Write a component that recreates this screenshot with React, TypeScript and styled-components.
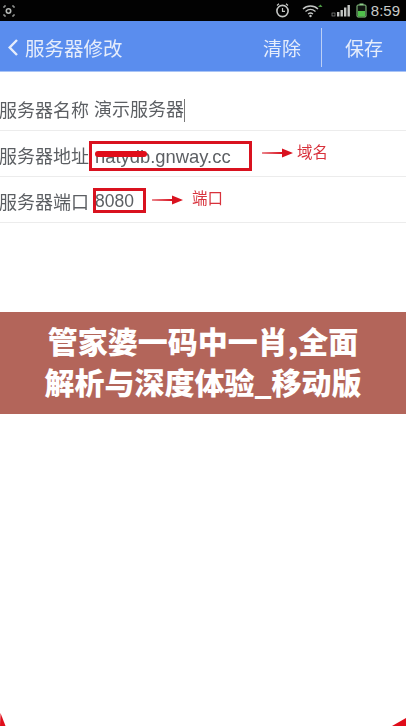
import { FC } from 'react';
import styled, { createGlobalStyle } from 'styled-components';

const GlobalStyle = createGlobalStyle`
    html, body {
        margin: 0;
        padding: 0;
        background: #fff;
    }
    * {
        box-sizing: border-box;
    }
`;

const Page = styled.div`
    width: 406px;
    height: 726px;
    position: relative;
    overflow: hidden;
    background: #fff;
    display: flex;
    flex-direction: column;
    font-family: 'Liberation Sans', 'Noto Sans CJK SC', sans-serif;
`;

const Shot = styled.div`
    height: 312px;
    filter: blur(0.35px);
`;

// ----------------------------------------------------------------------------

const StatusBar = styled.div`
    height: 21px;
    background: #020202;
    display: flex;
    align-items: center;
    padding: 0 6px 0 3px;
    color: #c9cdc9;
`;

const StatusRight = styled.div`
    margin-left: auto;
    display: flex;
    align-items: center;
`;

const Clock = styled.span`
    font-size: 15px;
    margin-left: 4px;
    color: #c8cac8;
`;

const StatusIcon = styled.svg<{ $left: number }>`
    margin-left: ${({ $left }) => $left}px;
`;

// ----------------------------------------------------------------------------

const Header = styled.div`
    height: 51px;
    background: #5a8dee;
    border-bottom: 1px solid #a9c4f5;
    display: flex;
    align-items: center;
    color: #e6edfb;
    font-size: 19px;
    padding: 2px 0 0 8px;
`;

const Title = styled.span`
    margin-left: 7px;
    font-size: 19.5px;
`;

const Actions = styled.div`
    margin-left: auto;
    display: flex;
    align-items: center;
    padding-right: 23px;
`;

const Divider = styled.div`
    width: 1px;
    height: 39px;
    margin: 0 23px 0 20px;
    background: #bcd0f6;
`;

// ----------------------------------------------------------------------------

const Row = styled.div<{ $height: number }>`
    height: ${({ $height }) => $height}px;
    border-bottom: 1px solid #ececec;
    display: flex;
    align-items: center;
    padding-top: 2px;
    color: #5c5f63;
    font-size: 18px;
    white-space: nowrap;
`;

const FirstRow = styled(Row)`
    padding-top: 15px;
`;

const Label = styled.span`
    font-family: 'Noto Sans CJK SC', sans-serif;
    margin-left: -1px;
`;

const Value = styled.span`
    margin-left: 5px;
    font-family: 'Noto Sans CJK SC', sans-serif;
`;

const Caret = styled.span`
    display: inline-block;
    width: 1px;
    height: 23px;
    background: #777;
    vertical-align: middle;
`;

const RedBox = styled.div<{ $width: number; $height: number; $top: number; $left: number; $size: number; $indent: number; $textTop: number }>`
    width: ${({ $width }) => $width}px;
    height: ${({ $height }) => $height}px;
    margin: ${({ $top }) => $top}px 0 0 ${({ $left }) => $left}px;
    text-indent: ${({ $indent }) => $indent}px;
    padding-top: ${({ $textTop }) => $textTop}px;
    font-size: ${({ $size }) => $size}px;
    border: 3px solid #d9121f;
    display: flex;
    align-items: center;
    position: relative;
`;

const Scribble = styled.div`
    position: absolute;
    left: 3px;
    top: 7px;
    width: 52px;
    height: 6px;
    border-radius: 3px;
    background: #e00d1a;
`;

const Arrow = styled.svg<{ $left: number; $top: number }>`
    margin: ${({ $top }) => $top}px 0 0 ${({ $left }) => $left}px;
    flex-shrink: 0;
`;

const Note = styled.span<{ $left: number }>`
    font-family: 'Noto Sans CJK SC', sans-serif;
    font-size: 15.5px;
    color: #d8323c;
    margin: -8px 0 0 ${({ $left }) => $left}px;
`;

// ----------------------------------------------------------------------------

const Banner = styled.div`
    height: 102px;
    background: #b3655a;
    color: #fff;
    font-family: 'Noto Sans CJK SC', sans-serif;
    font-weight: 900;
    font-size: 30px;
    line-height: 41px;
    text-align: center;
    padding-top: 8px;
    white-space: nowrap;
`;

const Corner = styled.svg<{ $side: 'left' | 'right' }>`
    position: absolute;
    bottom: 0;
    ${({ $side }) => $side}: 0;
`;

const RedArrow: FC<{ left: number; top: number }> = ({ left, top }) => (
    <Arrow $left={left} $top={top} width="32" height="12" viewBox="0 0 32 12">
        <path d="M0 5.5 L20 5 L20 1.5 L31 6 L20 10.5 L20 7 L0 6.5 Z" fill="#d9121f" />
    </Arrow>
);

export default function App() {
    return (
        <Page>
            <GlobalStyle />
            <Shot>
                <StatusBar>
                    <svg width="12" height="12" viewBox="0 0 12 12" fill="none" stroke="#b5b8b5">
                        <path d="M1 3V1H3M9 1H11V3M11 9V11H9M3 11H1V9" strokeWidth="1" />
                        <circle cx="5.5" cy="6" r="2.2" strokeWidth="1.6" />
                    </svg>
                    <StatusRight>
                        <svg width="17" height="17" viewBox="0 0 17 17" fill="none" stroke="#c4c6c4">
                            <circle cx="8.5" cy="9" r="5.6" strokeWidth="1.6" />
                            <path d="M8.5 6V9.3H11M3 3.5L5 1.8M14 3.5L12 1.8" strokeWidth="1.2" />
                        </svg>
                        <StatusIcon $left={11} width="22" height="14" viewBox="0 0 22 14" fill="none">
                            <path d="M1 5C5 1 12 1 16 5M3.5 7.5C6.5 5 10.5 5 13.5 7.5M6 10C7.5 8.8 9.5 8.8 11 10" stroke="#c4c6c4" strokeWidth="1.3" />
                            <circle cx="8.5" cy="12" r="1.2" fill="#c4c6c4" />
                            <path d="M16 3L18.5 0.5L20.5 3Z" fill="#4e9a45" />
                        </StatusIcon>
                        <StatusIcon $left={7} width="20" height="14" viewBox="0 0 20 14">
                            <rect x="1" y="9" width="3" height="3" fill="none" stroke="#8b8d8b" strokeWidth="0.7" />
                            <rect x="6" y="8" width="2.4" height="4.5" fill="#c4c6c4" />
                            <rect x="9.5" y="6" width="2.4" height="6.5" fill="#c4c6c4" />
                            <rect x="13" y="3.5" width="2.4" height="9" fill="#c4c6c4" />
                            <rect x="16.5" y="1" width="2.4" height="11.5" fill="#c4c6c4" />
                        </StatusIcon>
                        <StatusIcon $left={5} width="11" height="15" viewBox="0 0 11 15">
                            <rect x="3.5" y="0.5" width="4" height="2" fill="#8fd08a" />
                            <rect x="1" y="2" width="9" height="12" rx="1" fill="#101510" stroke="#8fd08a" strokeWidth="1" />
                            <rect x="2" y="8" width="7" height="5.5" fill="#4fbf4a" />
                        </StatusIcon>
                        <Clock>8:59</Clock>
                    </StatusRight>
                </StatusBar>
                <Header>
                    <svg width="10" height="17" viewBox="0 0 10 17" fill="none" stroke="#e6edfb" strokeWidth="2.4">
                        <path d="M9 1L1.7 8.5L9 16" />
                    </svg>
                    <Title>服务器修改</Title>
                    <Actions>
                        <span>清除</span>
                        <Divider />
                        <span>保存</span>
                    </Actions>
                </Header>
                <FirstRow $height={59}>
                    <Label>服务器名称</Label>
                    <Value>
                        演示服务器
                        <Caret />
                    </Value>
                </FirstRow>
                <Row $height={46}>
                    <Label>服务器地址</Label>
                    <RedBox $width={163} $height={30} $top={3} $left={0} $size={18.4} $indent={3} $textTop={1}>
                        natydb.gnway.cc
                        <Scribble />
                    </RedBox>
                    <RedArrow left={10} top={-4} />
                    <Note $left={3}>域名</Note>
                </Row>
                <Row $height={46}>
                    <Label>服务器端口</Label>
                    <RedBox $width={53} $height={25} $top={0} $left={4} $size={17.5} $indent={-1} $textTop={2}>
                        8080
                    </RedBox>
                    <RedArrow left={6} top={-2} />
                    <Note $left={8}>端口</Note>
                </Row>
            </Shot>
            <Banner>
                管家婆一码中一肖,全面
                <br />
                解析与深度体验_移动版
            </Banner>
            <Corner $side="left" width="6" height="13" viewBox="0 0 6 13">
                <path d="M0.5 0L5.5 13H0Z" fill="#e00d1a" />
            </Corner>
            <Corner $side="right" width="14" height="8" viewBox="0 0 14 8">
                <path d="M14 0V8H0Z" fill="#e00d1a" />
            </Corner>
        </Page>
    );
}
